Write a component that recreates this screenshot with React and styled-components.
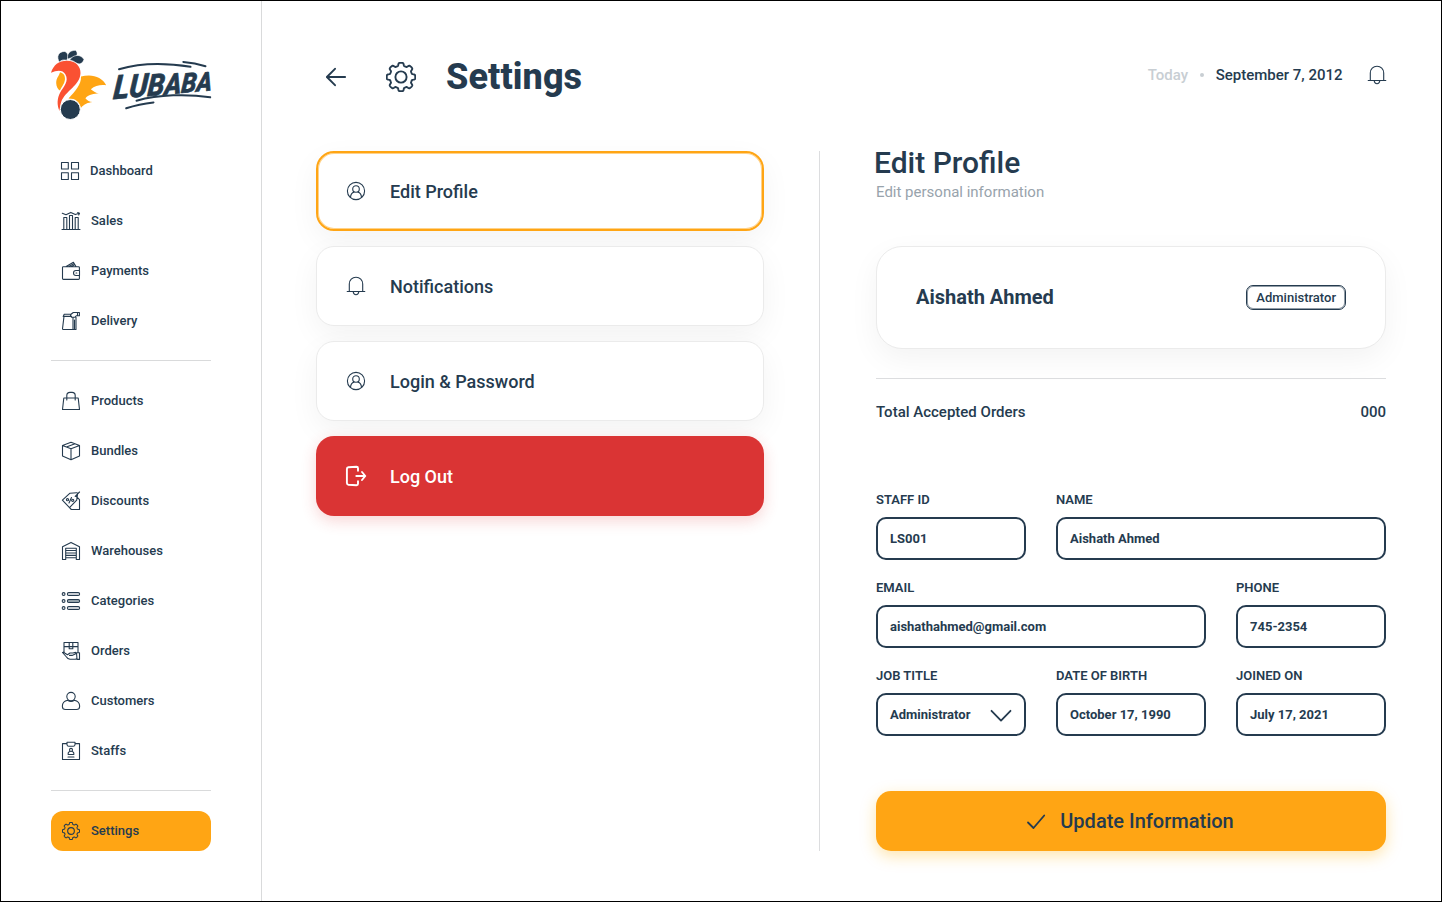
import React from "react";
import styled, { createGlobalStyle } from "styled-components";

const navy = "#253b4f";
const orange = "#ffa514";

const GlobalStyle = createGlobalStyle`
  * { box-sizing: border-box; }
  body { margin: 0; background: #fff; }
  button, input { font: inherit; color: inherit; }
`;

const Page = styled.div`
  display: flex;
  width: 1442px;
  height: 902px;
  border: 1px solid #000;
  overflow: hidden;
  background: #fff;
  color: ${navy};
  font-family: Roboto, "Liberation Sans", sans-serif;
`;

const Sidebar = styled.aside`
  width: 261px;
  flex: none;
  padding: 49px 50px 0;
  border-right: 1px solid #d9dadb;
`;

const LogoBox = styled.div`
  height: 101px;
  svg { display: block; overflow: visible; }
`;

const NavList = styled.nav`
  display: flex;
  flex-direction: column;
  gap: 10px;
`;

const NavItem = styled.a`
  display: flex;
  align-items: center;
  gap: 10px;
  height: 40px;
  padding: 0 10px 1px ${(p) => (p.$nudge ? 9 : 10)}px;
  border-radius: 12px;
  background: ${(p) => (p.$active ? orange : "transparent")};
  font-size: 13px;
  font-weight: 500;
  svg { position: relative; top: 0.5px; }
`;

const NavRule = styled.hr`
  height: 1px;
  margin: 19px 0 20px;
  border: 0;
  background: #d9dadb;
`;

const Main = styled.main`
  flex: 1;
  padding: 50px 55px 0 54px;
`;

const Header = styled.header`
  display: flex;
  align-items: center;
  height: 52px;
`;

const BackButton = styled.button`
  display: flex;
  padding: 0;
  margin: 0 40px 0 10px;
  border: 0;
  background: none;
`;

const Title = styled.h1`
  margin: 0 0 0 30px;
  font-size: 36px;
  line-height: 42px;
  font-weight: 800;
  letter-spacing: 0.08px;
`;

const DateBar = styled.div`
  display: flex;
  align-items: center;
  margin: 0 -0.5px 4px auto;
  font-size: 15px;
  font-weight: 500;
`;

const Muted = styled.span`
  color: #c8ced3;
`;

const Dot = styled.i`
  width: 4px;
  height: 4px;
  margin: 0 11.5px 0 12px;
  border-radius: 50%;
  background: #c8ced3;
`;

const BellButton = styled.span`
  display: flex;
  margin-left: 24px;
`;

const Columns = styled.div`
  display: flex;
  height: 700px;
  margin-top: 48px;
`;

const Menu = styled.div`
  display: flex;
  flex-direction: column;
  gap: 15px;
  width: 448px;
`;

const menuTones = {
  plain: `background:#fff; border:1px solid #ebebeb; box-shadow:0 10px 30px rgba(0,0,0,.05);`,
  active: `background:#fff; border:2px solid ${orange}; box-shadow:inset 0 0 0 1px rgba(255,165,20,.5), 0 10px 30px rgba(0,0,0,.05);`,
  danger: `background:#da3434; border:0; color:#fff; box-shadow:0 5px 15px rgba(218,52,52,.2);`,
};

const MenuButton = styled.button`
  display: flex;
  align-items: center;
  height: 80px;
  padding: 0;
  border-radius: 18px;
  font-size: 18px;
  font-weight: 500;
  text-align: left;
  ${(p) => menuTones[p.$tone]}
`;

const MenuIcon = styled.span`
  display: flex;
  justify-content: center;
  width: 24px;
  margin: 0 22px 0 ${(p) => 28 - p.$edge}px;
`;

const Separator = styled.div`
  width: 1px;
  margin: 0 56px 0 55px;
  background: #dcdddf;
`;

const Panel = styled.section`
  width: 510px;
  display: flex;
  flex-direction: column;
`;

const PanelTitle = styled.h2`
  margin: -6px 0 0 -2px;
  font-size: 30px;
  line-height: 36px;
  font-weight: 500;
`;

const PanelNote = styled.p`
  margin: 1px 0 0;
  font-size: 15px;
  line-height: 20px;
  color: #98a3ac;
`;

const PersonCard = styled.div`
  display: flex;
  align-items: center;
  justify-content: space-between;
  height: 103px;
  margin-top: 44px;
  padding: 0 39px;
  border: 1px solid #ebebeb;
  border-radius: 26px;
  background: #fff;
  box-shadow: 0 10px 30px rgba(0, 0, 0, 0.05);
`;

const PersonName = styled.strong`
  margin-bottom: 2px;
  font-size: 20px;
  line-height: 24px;
  font-weight: 700;
`;

const RoleTag = styled.span`
  height: 25px;
  padding: 0 9px;
  border: 1px solid ${navy};
  border-radius: 7px;
  box-shadow: inset 0 0 0 1px rgba(37, 59, 79, 0.5);
  font-size: 13px;
  line-height: 23px;
  font-weight: 500;
`;

const Stat = styled.div`
  display: flex;
  justify-content: space-between;
  margin-top: 29px;
  padding-top: 23px;
  border-top: 1px solid #dcdddf;
  font-size: 15px;
  line-height: 20px;
  font-weight: 500;
`;

const Form = styled.form`
  display: grid;
  grid-template-columns: repeat(3, 150px);
  gap: 18px 30px;
  margin-top: 69px;
`;

const Field = styled.label`
  grid-column: span ${(p) => p.$span || 1};
  display: flex;
  flex-direction: column;
  gap: 8px;
  padding-bottom: 1px;
  font-size: 13px;
  line-height: 18px;
  font-weight: 600;
`;

const Control = styled.span`
  display: flex;
  align-items: center;
  justify-content: space-between;
  height: 43px;
  padding: 0 12px;
  border: 2px solid ${navy};
  border-radius: 10px;
  font-weight: 700;
`;

const SubmitButton = styled.button`
  display: flex;
  align-items: center;
  justify-content: center;
  gap: 14px;
  height: 60px;
  margin-top: auto;
  padding: 0 2px 0 0;
  border: 0;
  border-radius: 15px;
  background: ${orange};
  box-shadow: 0 5px 15px rgba(255, 180, 20, 0.35);
  font-size: 20px;
  font-weight: 500;
`;

function Svg({ size = 20, box = 20, width = 1.1, children }) {
  return (
    <svg width={size} height={size} viewBox={`0 0 ${box} ${box}`} fill="none"
      stroke="currentColor" strokeWidth={width} strokeLinecap="round" strokeLinejoin="round">
      {children}
    </svg>
  );
}

const gearPath = (() => {
  const points = [];
  for (let i = 0; i < 240; i++) {
    const a = (i / 240) * Math.PI * 2;
    const r = 12.75 + (1.5 * Math.tanh(2.6 * (Math.cos(8 * a) + 0.12))) / Math.tanh(2.6);
    points.push(`${(15 + r * Math.sin(a)).toFixed(2)} ${(15 - r * Math.cos(a)).toFixed(2)}`);
  }
  return `M${points.join("L")}Z`;
})();

const Gear = ({ size, width }) => (
  <Svg size={size} box={30} width={width}>
    <path d={gearPath} />
    <circle cx="15" cy="15" r="5.6" />
  </Svg>
);

const GearSlot = styled.i`
  display: flex;
  padding: 1px;
`;

const Bell = () => (
  <Svg>
    <path d="M1.2 15.5H18.8M3.3 15.3V8.1C3.3 4.1 6.2 1.3 10 1.3S16.7 4.1 16.7 8.1V15.3M7.2 15.8C7.4 17.7 8.5 18.7 10 18.7S12.6 17.7 12.8 15.8" />
  </Svg>
);

const UserCircle = () => (
  <Svg>
    <circle cx="10" cy="10" r="8.6" />
    <circle cx="10" cy="8" r="3.3" />
    <path d="M4.5 16.3C4.7 13.5 6 11.7 8 11.1M15.5 16.3C15.3 13.5 14 11.7 12 11.1" />
  </Svg>
);

const icons = {
  dashboard: <Svg><path d="M1.5 1.5H8.3V8H1.5ZM11.5 1.5H18.5V8H11.5ZM1.5 11.8H8.3V18.5H1.5ZM11.5 11.8H18.5V18.5H11.5Z" /></Svg>,
  sales: <Svg width={1.1}><path d="M1 18.5H19M2.8 18.3V6.5H5.8V18.3M8.5 18.3V4.5H11.5V18.3M14.2 18.3V6.5H17.2V18.3M1.3 2.3L5 3.8L9.8 1.4L14.3 3.6L18.3 2.3M16.7 1.5L18.5 2.2L17.7 4" /></Svg>,
  payments: <Svg width={1.1}><path d="M18.4 9.5V6.5Q18.4 5.7 17.5 5.7H2.2Q1.5 5.7 1.5 6.5V17.5Q1.5 18.4 2.4 18.4H17.5Q18.4 18.4 18.4 17.5V14.5M18.5 9.5H15A2.5 2.5 0 0 0 15 14.5H18.5ZM5.2 5.5L12.4 1.3L15 5.5M8 5.5L12.8 2.6M10.5 5.5L13.5 3.7M15 12H15.8" /></Svg>,
  delivery: <Svg width={1.1}><path d="M11.4 18.5H2.3Q1.5 18.5 1.5 17.7L3 5.4H10.5M2.2 5.4L3.2 3.3H10M10 3.3L12.3 1.5H18.4V4.7H15.5L14 6.2H10.5L9.5 4.7ZM12 6.3V18.5H15V6.3M13.5 9V18M16.5 1.8V4.5" /></Svg>,
  products: <Svg><path d="M2.8 7H17.2L18.5 18.5H1.5ZM5.8 9V4.5Q5.8 1.4 9 1.4H11Q14.2 1.4 14.2 4.5V9" /></Svg>,
  bundles: <Svg><path d="M10 1.3L18.5 4.5V15L10 18.7L1.5 15V4.5ZM1.5 4.5L10 7.8L18.5 4.5M10 7.8V18.7M5.4 6L14 2.8" /></Svg>,
  discounts: <Svg width={1.1}><path d="M1.4 9.2L9 2.2L15.8 1.7Q16.8 1.8 16.6 3L15.7 9.2L8.5 16.6ZM8.5 16.6L10.3 18.5H18.5V8.7L15.3 5.5M18.5 1L14.2 5.3M10.5 6.5L8 12" /><circle cx="6.5" cy="8.7" r="1.1" /><circle cx="11.7" cy="9.3" r="1.1" /></Svg>,
  warehouses: <Svg><path d="M1.5 18.5V5.7L10 1.4L18.5 5.7V18.5H15.3V7.3H4.7V18.5ZM5.5 9.5H14.5M5.5 12H14.5M5.5 14.4H14.5M5.5 16.8H14.5" /></Svg>,
  categories: <Svg width={1.1}><circle cx="2.6" cy="3" r="1.4" /><circle cx="2.6" cy="10" r="1.4" /><circle cx="2.6" cy="17" r="1.4" /><rect x="6.4" y="1.6" width="12.2" height="2.8" rx="1.4" /><rect x="6.4" y="8.6" width="12.2" height="2.8" rx="1.4" fill="#bac6c9" /><rect x="6.4" y="15.6" width="12.2" height="2.8" rx="1.4" /></Svg>,
  orders: <Svg width={1.1}><path d="M3 11V1.5H17V11.5M3 5.6H17M8.2 1.5V7.7H11.8V1.5M1.5 11.5L5.5 16Q6.5 17.8 9 18.2H14.5L16 17.5M1.5 11.5Q3 11 4 12.2L6.5 13.7L9 12H12L14.5 11.4Q15.5 12.2 14.3 13L11 14.4H8.5M15.5 11.8H18.5V18.4H16Z" /></Svg>,
  customers: <Svg><circle cx="10" cy="5.6" r="4.2" /><path d="M6.7 9.2C3.2 10 1.4 12 1.4 14.7V15.8Q1.5 18.5 4.5 18.5H15.5Q18.5 18.5 18.6 15.8V14.7C18.6 12 16.8 10 13.3 9.2Q10 11.8 6.7 9.2Z" /></Svg>,
  staffs: <Svg><path d="M6 2.6H1.5V18.5H18.5V2.6H14M6 1.3H14V3.8Q13.8 5.3 12.3 5.3H7.7Q6.2 5.3 6 3.8ZM7 16H13M7.2 13.5V12Q7.5 10.8 8.8 10.5M12.8 13.5V12Q12.5 10.8 11.2 10.5M7.2 13.5H12.8" /><circle cx="10" cy="8.9" r="1.5" /></Svg>,
  settings: <GearSlot><Gear size={18} width={1.8} /></GearSlot>,
};

const primaryNav = ["Dashboard", "Sales", "Payments", "Delivery"];
const secondaryNav = ["Products", "Bundles", "Discounts", "Warehouses", "Categories", "Orders", "Customers", "Staffs"];

const NavLinks = ({ items, active }) => (
  <NavList>
    {items.map((label) => (
      <NavItem key={label} $active={active} $nudge={label === "Dashboard"}>
        {icons[label.toLowerCase()]}
        <span>{label}</span>
      </NavItem>
    ))}
  </NavList>
);

const Logo = () => (
  <svg width="160" height="70" viewBox="0 0 160 70" role="img" aria-label="Lubaba">
    <g fill={navy} stroke="#fff" strokeWidth="0.6">
      <path d="M15.6 10.2C12 9.5 10 10.3 8.4 12C5.2 7 7 1.4 14 1.4C18 4 17.6 7.6 15.6 10.2Z" />
      <path d="M17 9.2C15.2 4.5 18.6 0.2 24.6 0.3C27.6 3.4 26 6.8 22.5 7.5C20.2 8 18.5 8 17 9.2Z" />
      <path d="M18.6 10C22.2 4.4 29.8 3.6 33 9.6C31 14.8 27.7 14.6 24.7 12.6C22.8 11.2 21 10.4 18.6 10Z" />
    </g>
    <path fill={orange} d="M9 22.2C8.2 26 5.2 27.5 5.2 33C5.2 36.5 7 39.5 9 40.5C10.5 36.5 15 32.5 13.8 27C13.4 24.5 12 22.8 9 22.2ZM30 26.6C40.5 23.4 51 26.6 55.2 35.2C50 34.6 44 35.2 39.8 39.2C42.6 41.6 45 43 47.8 43.5C42.8 43.7 38.2 44.2 34.4 48.2C36.2 50.6 38.6 51.8 41.5 52C37 52.6 33 54 29.9 58C28.8 51.8 24.5 48.5 17.5 48.5C24 41.7 30.5 34.5 30 26.6Z" />
    <path fill="#fa5132" d="M0 22.8C2.4 14.8 8 10.6 16.1 10.7C24.4 10.8 29.7 16 29.5 23.1C29.1 35.8 14.5 40.5 10.2 52C9.1 55 9 58 8.5 61C5.8 55.2 6 48.5 9.2 42.6C12.5 36.3 18.4 31.4 14.3 24.2C11.5 19.3 5.5 20.2 0 22.8Z" />
    <circle cx="19.3" cy="59.5" r="10" fill={navy} stroke="#fff" strokeWidth="1" />
    <g fill="none" stroke={navy} strokeWidth="2" strokeLinecap="round">
      <path d="M68 19.2C89 13 115 12.8 139.5 16.8M132.3 11.9Q144 12.8 154.5 16.2M85.5 50.7C108 44.5 136 43.8 159.2 47.3M75.2 58.3Q88 53.8 102.5 52.4" />
    </g>
    <text transform="translate(61.8 49.3) rotate(-5.2) skewX(-10)" fill={navy} stroke={navy} strokeWidth="0.7"
      strokeLinejoin="round" fontFamily="Roboto, sans-serif" fontStyle="italic" fontWeight="800" textLength="99" lengthAdjust="spacingAndGlyphs">
      <tspan fontSize="33">L</tspan><tspan fontSize="32">U</tspan><tspan fontSize="30">B</tspan>
      <tspan fontSize="28.5">A</tspan><tspan fontSize="27">B</tspan><tspan fontSize="26">A</tspan>
    </text>
  </svg>
);

const fields = [
  { label: "STAFF ID", value: "LS001" },
  { label: "NAME", value: "Aishath Ahmed", span: 2 },
  { label: "EMAIL", value: "aishathahmed@gmail.com", span: 2 },
  { label: "PHONE", value: "745-2354" },
  { label: "JOB TITLE", value: "Administrator", select: true },
  { label: "DATE OF BIRTH", value: "October 17, 1990" },
  { label: "JOINED ON", value: "July 17, 2021" },
];

const LogOutIcon = () => (
  <Svg size={24} box={24} width={1.9}>
    <path d="M14 6.8V4.2Q14 2.8 12.5 2.8L4.4 3.3Q2.9 3.5 2.9 5V19Q2.9 20.5 4.4 20.7L12.5 21.2Q14 21.2 14 19.8V17.2M12.3 12H21M18 8L21.3 12L18 16" />
  </Svg>
);

const menu = [
  { label: "Edit Profile", tone: "active", icon: <UserCircle />, edge: 2 },
  { label: "Notifications", tone: "plain", icon: <Bell />, edge: 1 },
  { label: "Login & Password", tone: "plain", icon: <UserCircle />, edge: 1 },
  { label: "Log Out", tone: "danger", icon: <LogOutIcon />, edge: 0 },
];

export default function App() {
  return (
    <Page>
      <GlobalStyle />
      <Sidebar>
        <LogoBox><Logo /></LogoBox>
        <NavLinks items={primaryNav} />
        <NavRule />
        <NavLinks items={secondaryNav} />
        <NavRule />
        <NavLinks items={["Settings"]} active />
      </Sidebar>
      <Main>
        <Header>
          <BackButton aria-label="Back">
            <Svg width={1.9}><path d="M19.2 10H1M9 1.8L0.9 10L9 18.2" /></Svg>
          </BackButton>
          <Gear size={30} width={1.9} />
          <Title>Settings</Title>
          <DateBar>
            <Muted>Today</Muted>
            <Dot />
            <span>September 7, 2012</span>
            <BellButton><Bell /></BellButton>
          </DateBar>
        </Header>
        <Columns>
          <Menu>
            {menu.map((m) => (
              <MenuButton key={m.label} $tone={m.tone}>
                <MenuIcon $edge={m.edge}>{m.icon}</MenuIcon>
                {m.label}
              </MenuButton>
            ))}
          </Menu>
          <Separator />
          <Panel>
            <PanelTitle>Edit Profile</PanelTitle>
            <PanelNote>Edit personal information</PanelNote>
            <PersonCard>
              <PersonName>Aishath Ahmed</PersonName>
              <RoleTag>Administrator</RoleTag>
            </PersonCard>
            <Stat><span>Total Accepted Orders</span><span>000</span></Stat>
            <Form>
              {fields.map((f) => (
                <Field key={f.label} $span={f.span}>
                  {f.label}
                  <Control>
                    {f.value}
                    {f.select && (
                      <Svg size={22} box={22} width={1.8}><path d="M1.5 6.8L11 16.6L20.5 6.8" /></Svg>
                    )}
                  </Control>
                </Field>
              ))}
            </Form>
            <SubmitButton>
              <Svg width={1.8}><path d="M2 11.5L7.5 17L18.2 4.5" /></Svg>
              Update Information
            </SubmitButton>
          </Panel>
        </Columns>
      </Main>
    </Page>
  );
}
